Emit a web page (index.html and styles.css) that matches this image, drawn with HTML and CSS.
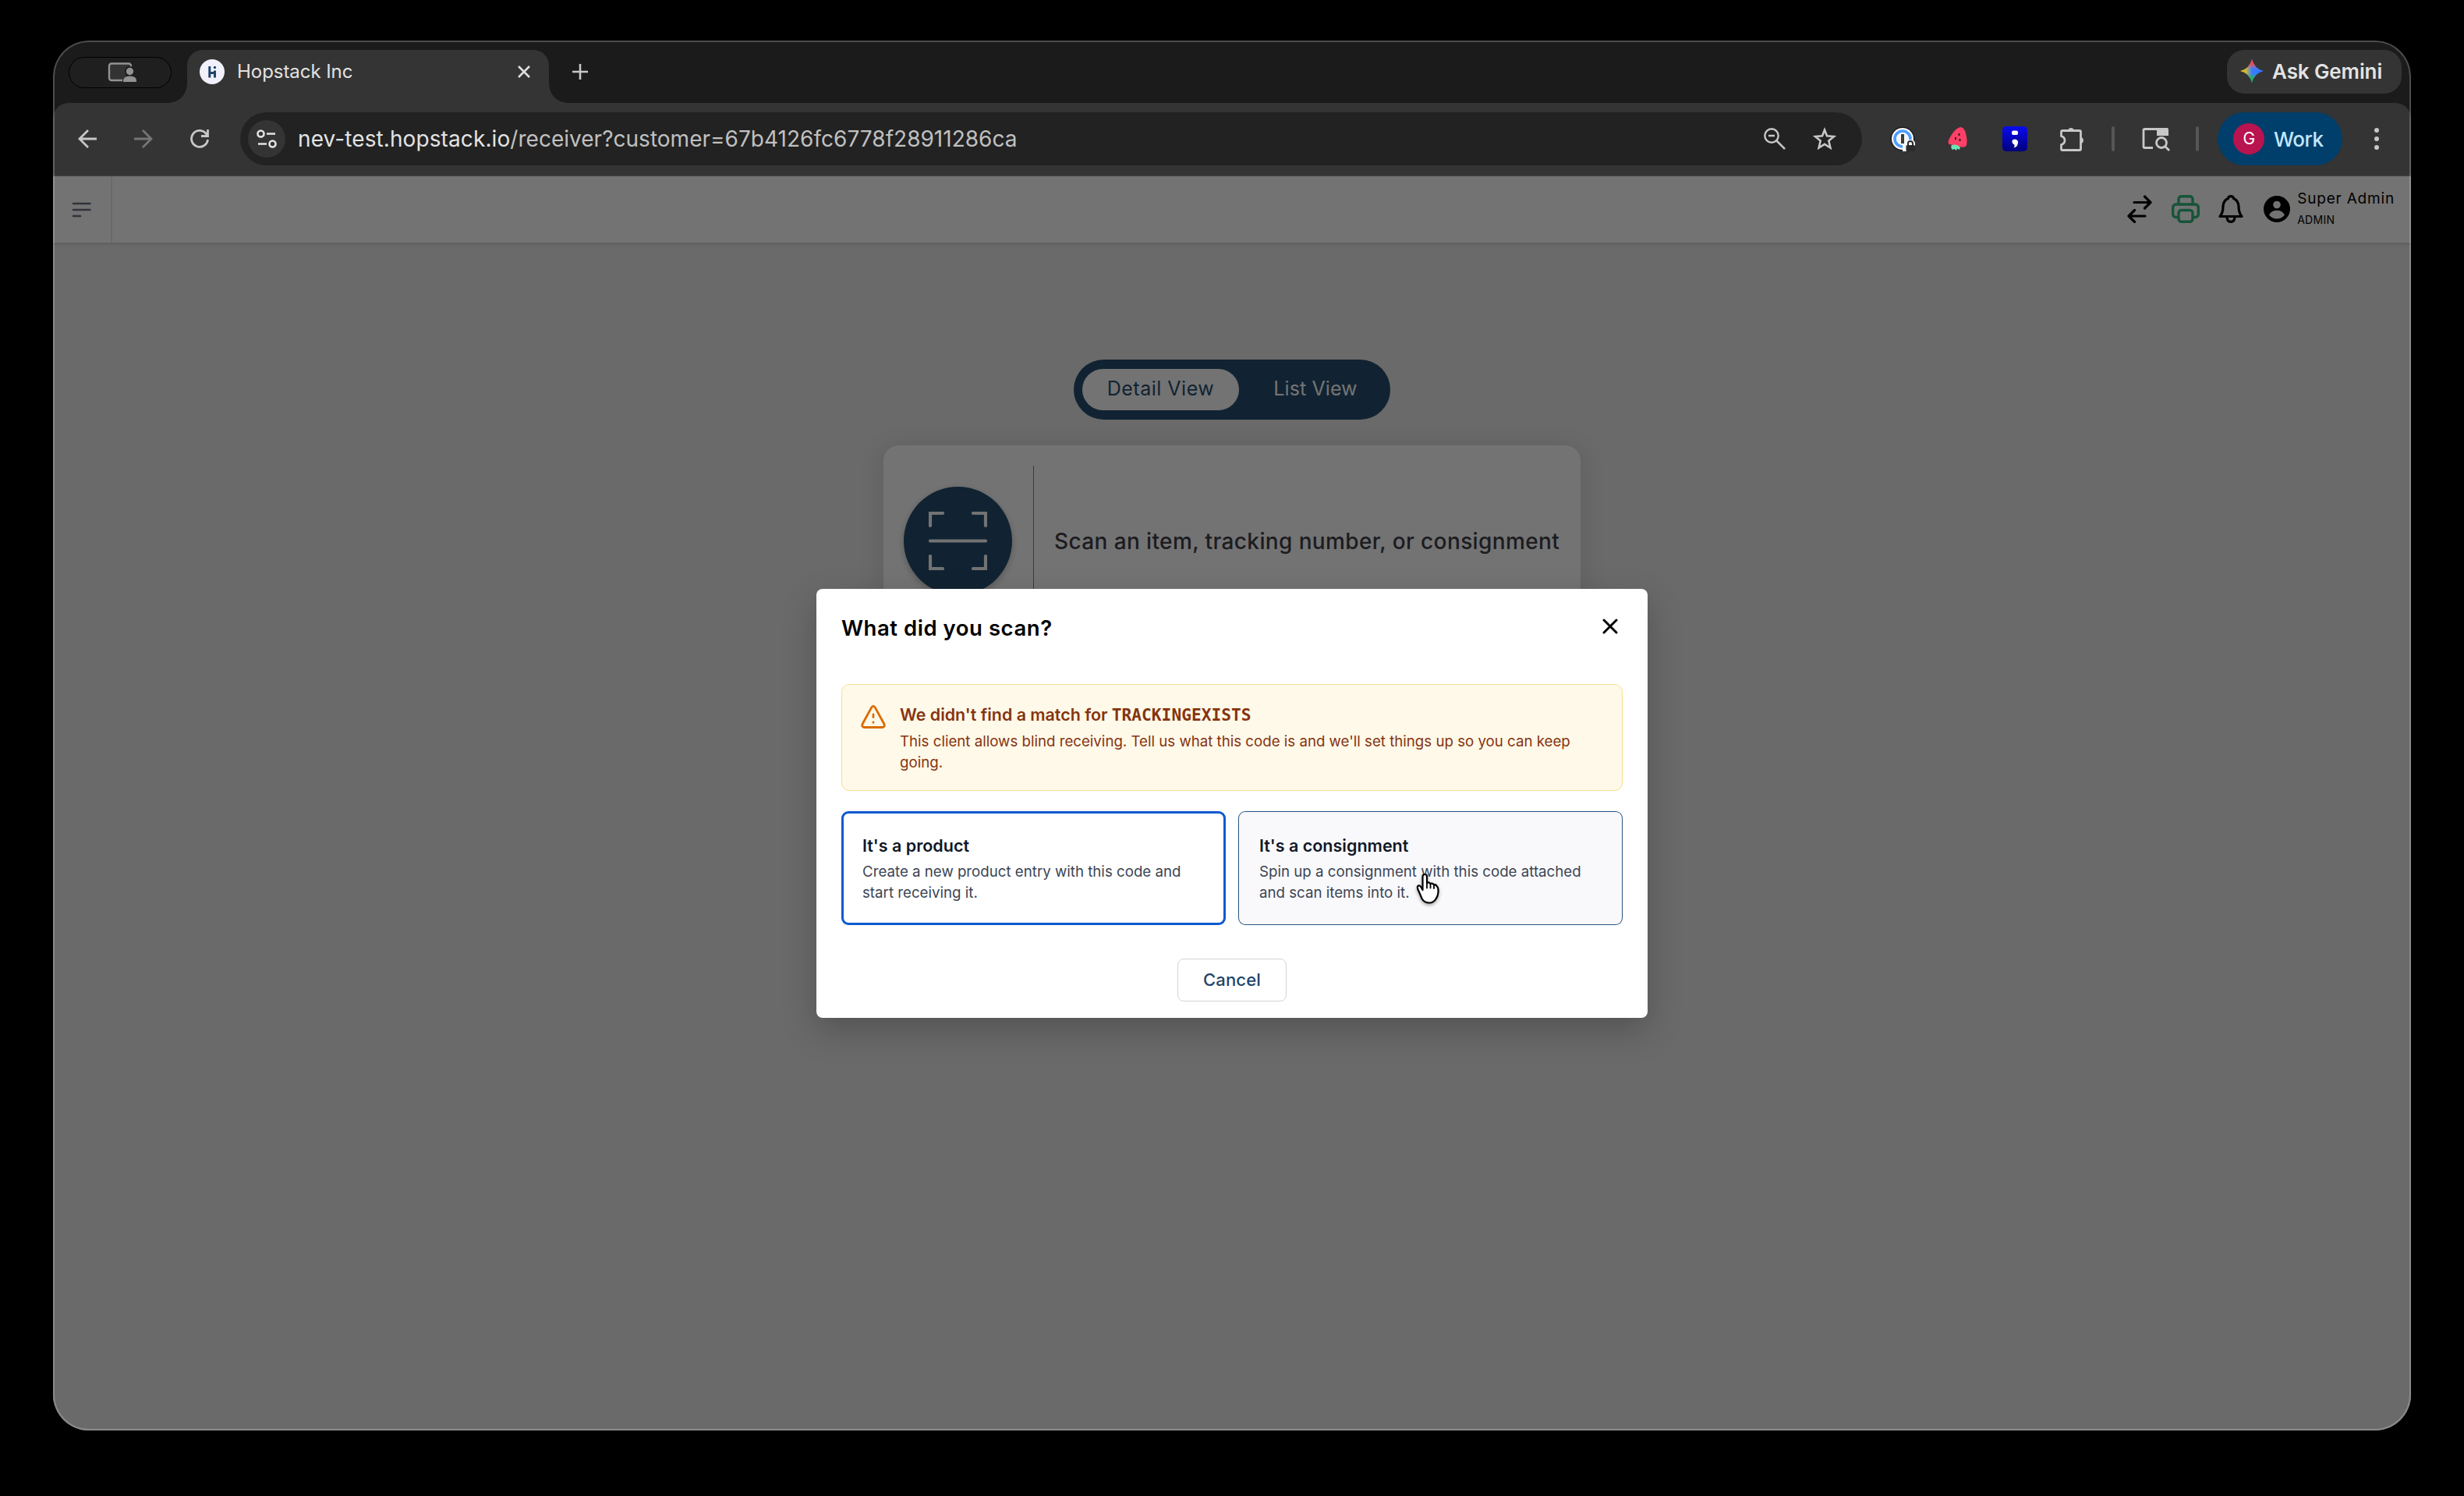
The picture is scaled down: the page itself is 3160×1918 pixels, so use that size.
FILE: index.html
```
<!DOCTYPE html>
<html lang="en">
<head>
    <meta charset="UTF-8">
    <meta name="viewport" content="width=device-width, initial-scale=1.0">
    <title>Hopstack Inc</title>
    <link rel="stylesheet" href="styles.css">
</head>
<body>
    <div class="window">
        <div class="tabstrip">
            <div class="share-pill">
                <svg width="38" height="26" viewBox="0 0 38 26">
                    <path d="M30 7V4.5A3 3 0 0 0 27 1.5H5A3 3 0 0 0 2 4.500V20A3 3 0 0 0 5 23H19" fill="#333" stroke="#929292" stroke-width="2.4"/>
                    <circle cx="28.500" cy="11.500" r="5.700" fill="#929292" stroke="#1f1f1f" stroke-width="2"/>
                    <path d="M20 25V23.500Q20 17.500 28.500 17.500T37 23.500V25Z" fill="#929292"/>
                </svg>
            </div>
            <div class="tab">
                <svg width="32" height="32" viewBox="0 0 32 32">
                    <circle cx="16" cy="16" r="16" fill="#f1f1fc"/>
                    <path d="M12.800 9V23.500M19.500 14.500V23.500M12.800 17.500H19.500" stroke="#1d446b" stroke-width="3" fill="none"/>
                    <circle cx="19.500" cy="10.500" r="1.700" fill="#1d446b"/>
                </svg>
                <span class="tab-title">Hopstack Inc</span>
                <svg class="tab-close" width="16" height="16" viewBox="0 0 16 16">
                    <path d="M1 1L15 15M15 1L1 15" stroke="#dedede" stroke-width="2.600"/>
                </svg>
            </div>
            <svg class="new-tab" width="20" height="20" viewBox="0 0 20 20">
                <path d="M10 0V20M0 10H20" stroke="#c7c7c7" stroke-width="2.600"/>
            </svg>
            <div class="gemini">
                <svg width="30" height="30" viewBox="0 0 30 30">
                    <defs>
                        <linearGradient id="gemBase" x1="0" y1="0.5" x2="1" y2="0.5">
                            <stop offset="0" stop-color="#fbbc04"/>
                            <stop offset="0.250" stop-color="#c9b83b"/>
                            <stop offset="0.500" stop-color="#3b7cff"/>
                            <stop offset="1" stop-color="#2f74ff"/>
                        </linearGradient>
                        <linearGradient id="gemEnds" x1="0" y1="0" x2="0" y2="1">
                            <stop offset="0" stop-color="#ff4136"/>
                            <stop offset="0.200" stop-color="#f04a4c"/>
                            <stop offset="0.420" stop-color="#e0607a" stop-opacity="0"/>
                            <stop offset="0.600" stop-color="#2fb46a" stop-opacity="0"/>
                            <stop offset="0.820" stop-color="#24b35b"/>
                            <stop offset="1" stop-color="#14a84b"/>
                        </linearGradient>
                    </defs>
                    <path d="M15 0Q18 12 30 15Q18 18 15 30Q12 18 0 15Q12 12 15 0Z" fill="url(#gemBase)"/>
                    <path d="M15 0Q18 12 30 15Q18 18 15 30Q12 18 0 15Q12 12 15 0Z" fill="url(#gemEnds)"/>
                </svg>
                <span>Ask Gemini</span>
            </div>
        </div>

        <div class="toolbar">
            <div class="nav">
                <svg width="24" height="24" viewBox="0 0 24 24"><path d="M13 1L2 12L13 23M2 12H24" fill="none" stroke="#c7c7c7" stroke-width="2.800"/></svg>
                <svg width="24" height="24" viewBox="0 0 24 24"><path d="M11 1L22 12L11 23M22 12H0" fill="none" stroke="#757575" stroke-width="2.800"/></svg>
                <svg width="24" height="24" viewBox="0 0 24 24"><path d="M22.500 13A10.500 10.500 0 1 1 20 5L22 8M22.500 0V8.500H14" fill="none" stroke="#c7c7c7" stroke-width="2.800"/></svg>
            </div>
            <div class="omnibox">
                <div class="site-info">
                    <svg width="26" height="24" viewBox="0 0 26 24">
                        <circle cx="5.500" cy="5.500" r="4" fill="none" stroke="#e3e3e3" stroke-width="2.600"/>
                        <circle cx="20.500" cy="18.500" r="4" fill="none" stroke="#e3e3e3" stroke-width="2.600"/>
                        <path d="M13 5.500H24M2 18.500H13" stroke="#e3e3e3" stroke-width="2.600"/>
                    </svg>
                </div>
                <div class="url"><span class="host">nev-test.hopstack.io</span>/receiver?customer=67b4126fc6778f28911286ca</div>
                <svg class="zoom-icon" width="28" height="28" viewBox="0 0 28 28">
                    <circle cx="10" cy="10" r="8.700" fill="none" stroke="#c7c7c7" stroke-width="2.400"/>
                    <path d="M6 10H14M16.500 16.500L27 27" stroke="#c7c7c7" stroke-width="2.600"/>
                </svg>
                <svg width="30" height="30" viewBox="0 0 30 30">
                    <path d="M15 3.500L18 11.200L27 12L20.300 17.600L22.400 26.500L15 21.800L7.600 26.500L9.700 17.600L3 12L12 11.200Z" fill="none" stroke="#c7c7c7" stroke-width="2.600"/>
                </svg>
            </div>
            <div class="extensions">
                <svg width="32" height="32" viewBox="0 0 32 32">
                    <circle cx="16" cy="16" r="15.500" fill="#1b1b1b"/>
                    <circle cx="16" cy="16" r="14" fill="#f4f6f8"/>
                    <circle cx="16" cy="16" r="10" fill="none" stroke="#4a9dff" stroke-width="3.600"/>
                    <rect x="14" y="10" width="4" height="12" fill="#3b3b3b"/>
                    <rect x="16" y="23" width="5" height="9" fill="#f4f6f8"/>
                    <rect x="19" y="17" width="13" height="15" rx="5" fill="#f4f6f8"/>
                    <rect x="20.500" y="24" width="11.500" height="8" rx="1.500" fill="#2b2b2b"/>
                    <path d="M23 24V22A3 3 0 0 1 29 22V24" fill="none" stroke="#2b2b2b" stroke-width="2"/>
                </svg>
                <svg width="32" height="32" viewBox="0 0 32 32">
                    <path d="M2.500 21Q2 18 8 9Q13 2 18 1Q23 1 25 9Q27.500 18 26 24Q24.500 27.500 19.500 26.500L6.500 23.500Q3 23 2.500 21Z" fill="#ff3f66"/>
                    <path d="M7 24Q14 22 18 27L17 30L14 28.500L13 31L10.500 29L8 30Q5 27 7 24Z" fill="#6be3b4"/>
                    <path d="M16.500 9V12M12 14V17M17.500 16V19" stroke="#2d1820" stroke-width="2"/>
                </svg>
                <svg width="32" height="32" viewBox="0 0 32 32">
                    <defs>
                        <linearGradient id="semi" x1="0" y1="0" x2="0" y2="1">
                            <stop offset="0" stop-color="#0a0af0"/>
                            <stop offset="1" stop-color="#00007c"/>
                        </linearGradient>
                    </defs>
                    <rect width="32" height="32" rx="5" fill="url(#semi)"/>
                    <rect x="12" y="5.500" width="8" height="5.500" rx="2" fill="#fff"/>
                    <path d="M12.500 18.500Q13 16.500 16 16.500Q20.500 17 20 21Q19.500 26.500 14.500 27.500Q16 25.500 15.500 23.500Q12 22 12.500 18.500Z" fill="#fff"/>
                </svg>
                <svg class="puzzle" width="34" height="32" viewBox="0 0 34 32">
                    <path d="M5.500 5.500H27A1.500 1.500 0 0 1 28.500 7V29A1.500 1.500 0 0 1 27 30.500H5A1.500 1.500 0 0 1 3.500 29V23.500Q8 22 8 18T3.500 12.500V7A1.500 1.500 0 0 1 5.500 5.500Z" fill="none" stroke="#c7c7c7" stroke-width="2.800"/>
                    <path d="M12 5A4.200 4.200 0 0 1 20 5ZM29 14A4.200 4.200 0 0 1 29 22Z" fill="#c7c7c7"/>
                </svg>
            </div>
            <span class="separator"></span>
            <svg class="side-search" width="36" height="32" viewBox="0 0 36 32">
                <path d="M14 27.500H3.500A1.500 1.500 0 0 1 2 26V5A1.500 1.500 0 0 1 3.500 3.500H32V11.500" fill="none" stroke="#c7c7c7" stroke-width="2.800"/>
                <path d="M19 2.500H32A2 2 0 0 1 34 4.500V12H19Z" fill="#c7c7c7"/>
                <circle cx="25" cy="21" r="6.500" fill="none" stroke="#c7c7c7" stroke-width="2.800"/>
                <path d="M29.500 25.500L35 31" stroke="#c7c7c7" stroke-width="2.800"/>
            </svg>
            <span class="separator"></span>
            <div class="profile">
                <span class="avatar">G</span>
                <span>Work</span>
            </div>
            <svg class="more" width="32" height="32" viewBox="0 0 32 32" fill="#c7c7c7">
                <circle cx="16" cy="5" r="3"/><circle cx="16" cy="16" r="3"/><circle cx="16" cy="27" r="3"/>
            </svg>
        </div>

        <div class="page">
            <header class="header">
                <div class="menu-btn">
                    <svg width="26" height="20" viewBox="0 0 26 20">
                        <path d="M2 2H23.500M2 10H23.500M2 18H11" stroke="#6b7280" stroke-width="2.600" stroke-linecap="round"/>
                    </svg>
                </div>
                <div class="header-right">
                    <svg width="32" height="36" viewBox="0 0 32 36" fill="none" stroke="#000" stroke-width="3.200" stroke-linecap="round" stroke-linejoin="round">
                        <path d="M9 9.500H30M22.500 2L30 9.500L22.500 17M23 27H2M9.500 19.500L2 27L9.500 34.500"/>
                    </svg>
                    <svg class="printer" width="36" height="36" viewBox="0 0 36 36" fill="none" stroke="#31bb81" stroke-width="3.400" stroke-linejoin="round">
                        <path d="M9 12V5A3.500 3.500 0 0 1 12.500 1.700H23.500A3.500 3.500 0 0 1 27 5V12"/>
                        <path d="M9 28.500H5.500A4 4 0 0 1 1.700 24.500V16A4 4 0 0 1 5.500 12H30.500A4 4 0 0 1 34.300 16V24.500A4 4 0 0 1 30.500 28.500H27"/>
                        <rect x="9" y="19.500" width="18" height="14.800" rx="3.500"/>
                    </svg>
                    <svg class="bell" width="32" height="36" viewBox="0 0 32 36" fill="none" stroke="#000" stroke-width="3.200" stroke-linejoin="round" stroke-linecap="round">
                        <path d="M2 27.500Q6 23 6 14.500Q6.500 7 12.500 4.500Q13 1.700 16 1.700T19.500 4.500Q25.500 7 26 14.500Q26 23 30 27.500Z"/>
                        <path d="M11 28Q11 34.300 16 34.300T21 28"/>
                    </svg>
                    <svg class="account" width="34" height="34" viewBox="0 0 34 34">
                        <circle cx="17" cy="17" r="17" fill="#000"/>
                        <circle cx="17" cy="11.500" r="4.800" fill="#fff"/>
                        <path d="M7 24.500Q10 18.800 17 18.800T27 24.500Q23 29.500 17 29.500T7 24.500Z" fill="#fff"/>
                    </svg>
                    <div class="user">
                        <div class="user-name">Super Admin</div>
                        <div class="user-role">ADMIN</div>
                    </div>
                </div>
            </header>

            <main class="main">
                <div class="toggle">
                    <div class="toggle-item active">Detail View</div>
                    <div class="toggle-item list">List View</div>
                </div>
                <div class="scan-card">
                    <div class="scan-circle">
                        <svg width="75" height="75" viewBox="0 0 75 75" fill="none" stroke="#fff" stroke-width="4.200" stroke-linecap="round">
                            <path d="M2 18V2H18M57 2H73V18M73 57V73H57M18 73H2V57M2 37.500H73"/>
                        </svg>
                    </div>
                    <div class="scan-divider"></div>
                    <div class="scan-text">Scan an item, tracking number, or consignment</div>
                </div>
            </main>

            <div class="overlay">
                <div class="modal">
                    <div class="modal-header">
                        <h2>What did you scan?</h2>
                        <svg width="20" height="20" viewBox="0 0 20 20">
                            <path d="M2 2L18 18M18 2L2 18" stroke="#000" stroke-width="3" stroke-linecap="round"/>
                        </svg>
                    </div>
                    <div class="alert">
                        <svg width="32" height="30" viewBox="0 0 32 30" fill="none" stroke="#d96c00" stroke-width="2.800" stroke-linecap="round" stroke-linejoin="round">
                            <path d="M13.800 2.800Q16 0 18.200 2.800L29.800 24Q31.500 28.200 27.500 28.500H4.500Q0.500 28.200 2.200 24Z"/>
                            <path d="M16 12V15.500M16 22V22.300"/>
                        </svg>
                        <div>
                            <div class="alert-title">We didn't find a match for <span class="code">TRACKINGEXISTS</span></div>
                            <div class="alert-text">This client allows blind receiving. Tell us what this code is and we'll set things up so you can keep going.</div>
                        </div>
                    </div>
                    <div class="choices">
                        <div class="choice focused">
                            <div class="choice-title">It's a product</div>
                            <div class="choice-text">Create a new product entry with this code and start receiving it.</div>
                        </div>
                        <div class="choice hovered">
                            <div class="choice-title">It's a consignment</div>
                            <div class="choice-text">Spin up a consignment with this code attached and scan items into it.</div>
                            <svg class="pointer" width="34" height="44" viewBox="0 0 34 44" fill="#fff" stroke="#000" stroke-width="2.200" stroke-linejoin="round" stroke-linecap="round">
                                <path d="M8.500 22V5Q8.500 2 11.200 2Q14 2 14 5V13Q16.500 11.500 18.500 14Q21 12.800 23 15.500Q25.500 14.500 27 17.500Q28.800 19 28.500 25Q28 30 25.800 33Q22.500 38.500 17 38.500Q10.500 38.500 7.500 33Q5.500 28 3 22.500Q1 18 2.500 16.800Q4.800 15.500 6.500 18.500Z"/>
                                <path d="M14 13V19.500M18.500 14V19.500M23 15.500V20" fill="none" stroke-width="1.800"/>
                            </svg>
                        </div>
                    </div>
                    <div class="cancel">Cancel</div>
                </div>
            </div>
        </div>
    </div>
</body>
</html>
```
FILE: styles.css
```
* {
    box-sizing: border-box;
}
body {
    margin: 0;
    padding: 52px 68px 84px;
    height: 1918px;
    background-color: #000;
    font-family: Inter, "Liberation Sans", sans-serif;
}
svg {
    display: block;
    flex: none;
}
.window {
    position: relative;
    height: 1782px;
    display: flex;
    flex-direction: column;
    background-color: #1b1b1b;
    border-radius: 46px;
    overflow: hidden;
}
/* thin light edge around the whole window */
.window::after {
    content: "";
    position: absolute;
    inset: 0;
    border: 2px solid rgba(255, 255, 255, 0.22);
    border-radius: 46px;
    pointer-events: none;
}

/* tab strip */
.tabstrip {
    height: 80px;
    display: flex;
    padding: 12px 12px 0 20px;
}
.share-pill {
    width: 132px;
    height: 40px;
    margin-top: 9px;
    border: 1px solid #000;
    border-radius: 20px;
    background-color: #1f1f1f;
    display: flex;
    justify-content: center;
    align-items: center;
    padding-left: 5px;
}
.tab {
    position: relative;
    width: 464px;
    height: 68px;
    margin-left: 20px;
    padding: 0 24px 12px 16px;
    background-color: #343434;
    border-radius: 20px 20px 0 0;
    display: flex;
    align-items: center;
}
.tab::before,
.tab::after {
    content: "";
    position: absolute;
    bottom: 0;
    width: 24px;
    height: 24px;
}
.tab::before {
    left: -24px;
    background: radial-gradient(circle at 0 0, transparent 23.500px, #343434 24px);
}
.tab::after {
    right: -24px;
    background: radial-gradient(circle at 100% 0, transparent 23.500px, #343434 24px);
}
.tab-title {
    margin: -1px 0 0 16px;
    font-size: 24px;
    letter-spacing: -0.05px;
    color: #e3e3e3;
}
.tab-close {
    margin-left: auto;
}
.new-tab {
    margin: 18px 0 0 30px;
}
.gemini {
    width: 224px;
    height: 56px;
    margin-left: auto;
    padding: 0 0 2px 17px;
    border-radius: 22px;
    background-color: #343434;
    display: flex;
    align-items: center;
    gap: 11px;
    font-size: 26px;
    font-weight: 600;
    letter-spacing: -0.1px;
    color: #e3e3e3;
}

/* toolbar */
.toolbar {
    height: 94px;
    padding: 12px 28px 0 32px;
    display: flex;
    background-color: #343434;
    border-bottom: 2px solid #3d3d3d;
    border-radius: 20px 20px 0 0;
}
.toolbar > * {
    flex: none;
    height: 68px;
}
.nav {
    display: flex;
    align-items: center;
    gap: 48px;
}
.omnibox {
    width: 2080px;
    margin-left: 40px;
    padding: 0 33px 0 10px;
    border-radius: 34px;
    background-color: #222;
    display: flex;
    align-items: center;
}
.site-info {
    width: 48px;
    height: 48px;
    border-radius: 50%;
    background-color: #343434;
    display: flex;
    justify-content: center;
    align-items: center;
}
.url {
    margin-left: 16px;
    font-size: 28px;
    letter-spacing: 0.02px;
    color: #c0c0c0;
}
.host {
    letter-spacing: 0.1px;
    color: #e3e3e3;
}
.zoom-icon {
    margin: 0 35px 0 auto;
}
.extensions {
    margin-left: 36px;
    display: flex;
    align-items: center;
    gap: 40px;
}
.puzzle {
    margin-right: -2px;
}
.toolbar .separator {
    width: 4px;
    height: 32px;
    margin: 18px 0 0 36px;
    border-radius: 2px;
    background-color: #565656;
}
.toolbar .side-search {
    height: 32px;
    margin: 18px -3px 0 35px;
}
.profile {
    width: 160px;
    margin-left: 24px;
    padding-left: 20px;
    border-radius: 34px;
    background-color: #003f6b;
    display: flex;
    align-items: center;
    gap: 12px;
    font-size: 26px;
    font-weight: 500;
    letter-spacing: -0.5px;
    color: #c2e7ff;
}
.avatar {
    width: 40px;
    height: 40px;
    border-radius: 50%;
    background-color: #b9144f;
    color: #fff;
    font-size: 21px;
    font-weight: 400;
    line-height: 40px;
    text-align: center;
}
.toolbar .more {
    height: 32px;
    margin: 18px 0 0 28px;
}

/* app */
.page {
    position: relative;
    flex: 1;
    background-color: #eaeaea;
}
.header {
    height: 87px;
    display: flex;
    justify-content: space-between;
    background-color: #fff;
    border-bottom: 2px solid #dadada;
    box-shadow: 0 1px 3px rgba(0, 0, 0, 0.08);
}
.menu-btn {
    width: 76px;
    border-right: 2px solid #ececec;
    padding: 1px 0 0 24px;
    display: flex;
    align-items: center;
}
.header-right {
    display: flex;
    align-items: center;
    padding: 0 21px 1px 0;
}
.printer {
    margin-left: 25px;
}
.bell {
    margin-left: 24px;
}
.account {
    margin-left: 26px;
}
.user {
    margin-left: 9px;
    line-height: 27px;
    color: #000;
}
.user-name {
    font-size: 19px;
    letter-spacing: 0.82px;
}
.user-role {
    font-size: 14px;
    letter-spacing: 0.3px;
}
.main {
    display: flex;
    flex-direction: column;
    align-items: center;
    padding-top: 148px;
}
.toggle {
    width: 406px;
    height: 77px;
    padding: 12px 11px;
    border-radius: 39px;
    background-color: #264e6f;
    display: flex;
    justify-content: space-between;
    font-size: 25px;
    font-weight: 400;
    color: #fff;
}
.toggle-item {
    width: 201px;
    line-height: 51px;
    text-align: center;
    border-radius: 27px;
    letter-spacing: 0.5px;
}
.toggle-item.list {
    width: 170px;
    letter-spacing: 0.1px;
}
.toggle-item.active {
    background-color: #fff;
    color: #264e6f;
}
.scan-card {
    width: 894px;
    height: 245px;
    margin-top: 33px;
    padding: 26px;
    border-radius: 20px;
    background-color: #fff;
    box-shadow: 0 4px 32px rgba(0, 0, 0, 0.12);
    display: flex;
    align-items: center;
}
.scan-circle {
    flex: none;
    width: 139px;
    height: 139px;
    border-radius: 50%;
    background-color: #264e6f;
    box-shadow: 0 3px 8px rgba(0, 0, 0, 0.25);
    display: flex;
    justify-content: center;
    align-items: center;
}
.scan-divider {
    flex: none;
    width: 1px;
    height: 193px;
    margin: 0 26px 0 27px;
    background-color: #808080;
}
.scan-text {
    font-size: 28px;
    font-weight: 500;
    letter-spacing: 0.38px;
    white-space: nowrap;
    color: #3e3e48;
}

/* modal */
.overlay {
    position: absolute;
    inset: 0;
    background-color: rgba(0, 0, 0, 0.55);
    display: flex;
    justify-content: center;
    align-items: center;
}
.modal {
    width: 1066px;
    height: 550px;
    padding: 0 32px;
    background-color: #fff;
    border-radius: 8px;
    box-shadow: 0 16px 44px rgba(0, 0, 0, 0.22);
}
.modal-header {
    height: 122px;
    padding: 31px 6px 0 0;
    display: flex;
    justify-content: space-between;
}
.modal-header h2 {
    margin: 0;
    font-size: 27.500px;
    line-height: 38px;
    font-weight: 600;
    letter-spacing: 0.54px;
    color: #000;
}
.modal-header svg {
    margin-top: 7px;
}
.alert {
    height: 137px;
    padding: 25px 25px 0 24px;
    border: 1px solid #f8e08e;
    border-radius: 10px;
    background-color: #fff9e9;
    display: flex;
    gap: 18px;
    color: #86340f;
}
.alert svg {
    margin-top: 1px;
}
.alert-title {
    font-size: 21.400px;
    line-height: 26px;
    font-weight: 600;
}
.code {
    font-family: "DejaVu Sans Mono", monospace;
    font-size: 21.200px;
    font-weight: 700;
}
.alert-text {
    margin-top: 7px;
    font-size: 18.680px;
    line-height: 27px;
}
.choices {
    display: flex;
    gap: 16px;
    margin-top: 26px;
}
.choice {
    position: relative;
    flex: 1;
    height: 146px;
    padding: 31px 24px 0 27px;
    border-radius: 9px;
}
.choice.focused {
    box-shadow: inset 0 0 0 3px #0b5ace;
}
.choice.hovered {
    box-shadow: inset 0 0 0 1px #2a567e;
    background-color: #f9f9fc;
}
.choice-title {
    font-size: 21.500px;
    line-height: 27px;
    font-weight: 600;
    color: #111827;
}
.choice-text {
    margin-top: 6px;
    font-size: 18.700px;
    line-height: 27px;
    color: #3c4554;
}
.pointer {
    position: absolute;
    left: 228px;
    top: 79px;
    filter: drop-shadow(0 2px 2px rgba(0, 0, 0, 0.35));
}
.cancel {
    width: 140px;
    height: 55px;
    margin: 43px auto 0;
    border: 1px solid #cfd3da;
    border-radius: 8px;
    font-size: 22px;
    line-height: 52px;
    font-weight: 500;
    letter-spacing: 0.2px;
    text-align: center;
    color: #1e4468;
}
```
